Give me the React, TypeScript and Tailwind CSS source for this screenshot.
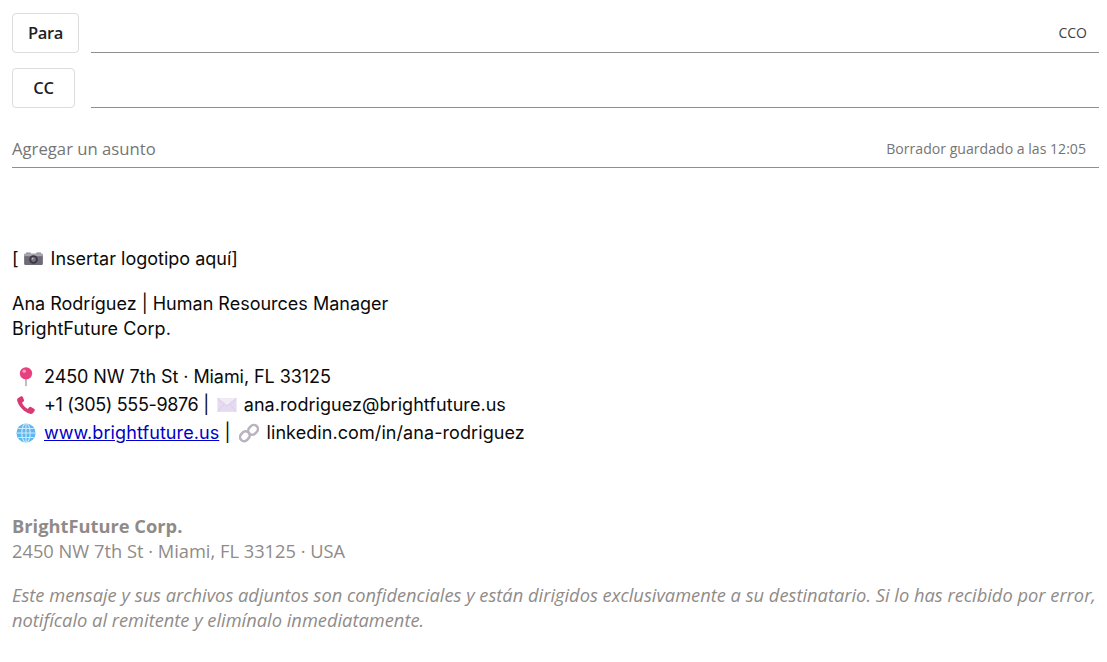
const Camera = () => (
  <svg width="21" height="15" viewBox="0 0 22 16" className="shrink-0">
    <rect x="1" y="3" width="20" height="12" rx="1.5" fill="#6f6a78" />
    <rect x="3" y="1.5" width="5" height="2" fill="#9b97a3" />
    <rect x="14" y="1.5" width="5" height="2" fill="#9b97a3" />
    <rect x="1" y="3" width="20" height="2.5" fill="#a8a4ae" />
    <circle cx="11" cy="9" r="4.6" fill="#3d3944" />
    <circle cx="11" cy="9" r="2.6" fill="#77727f" />
    <circle cx="10" cy="8" r="0.9" fill="#c9c6cf" />
  </svg>
);
const Pin = () => (
  <svg width="20" height="20" viewBox="0 0 20 22" className="shrink-0">
    <rect x="9.2" y="10" width="1.6" height="11" fill="#a9a4ad" />
    <circle cx="10" cy="7" r="6.8" fill="#e8407f" />
    <circle cx="8" cy="4.6" r="1.8" fill="#f9a3c4" />
  </svg>
);
const Phone = () => (
  <svg width="20" height="20" viewBox="0 0 22 22" className="shrink-0">
    <path d="M2 3.5 L5.5 1.5 C6.5 1 7.2 1.5 7.6 2.3 L8.8 5.5 C9 6.4 8.6 7 8 7.5 L6.6 8.6 C7.6 11.3 10 14 13 15.3 L14.4 13.6 C15 13 15.7 12.9 16.4 13.2 L19.8 15 C20.8 15.6 21 16.4 20.5 17.2 L19 19.6 C18.2 20.8 16.8 21 15.4 20.6 C8.6 18.6 3.4 13 1.4 6.6 C1 5.3 1.2 4.2 2 3.5 Z" fill="#d93a72" />
  </svg>
);
const Mail = () => (
  <svg width="20" height="16" viewBox="0 0 22 16" className="shrink-0">
    <rect x="0.5" y="0.5" width="21" height="15" fill="#e6daf0" />
    <path d="M0.5 0.5 L11 9 L21.5 0.5" fill="#f1eaf7" stroke="#d3c3e2" strokeWidth="0.8" />
    <path d="M0.5 15.5 L8 7 M21.5 15.5 L14 7" stroke="#d8cbe6" strokeWidth="0.8" fill="none" />
  </svg>
);
const Globe = () => (
  <svg width="20" height="20" viewBox="0 0 22 22" className="shrink-0">
    <circle cx="11" cy="11" r="10.5" fill="#5cb8ee" />
    <g fill="none" stroke="#cfeafb" strokeWidth="1.2">
      <ellipse cx="11" cy="11" rx="4.6" ry="10.5" />
      <path d="M11 .5 V21.5 M.5 11 H21.5 M2.5 6 H19.5 M2.5 16 H19.5" />
    </g>
  </svg>
);
const Link = () => (
  <svg width="20" height="20" viewBox="0 0 22 22" className="shrink-0">
    <g fill="none" stroke="#b9b3c1" strokeWidth="2.8" strokeLinecap="round">
      <rect x="11" y="1.8" width="9" height="11.5" rx="4.5" transform="rotate(42 15.5 7.5)" />
      <rect x="2" y="8.8" width="9" height="11.5" rx="4.5" transform="rotate(42 6.5 14.5)" />
    </g>
  </svg>
);

export default function App() {
  return (
    <div className="w-[1107px] h-[662px] overflow-hidden bg-white pl-3 pr-2 pt-[13px] text-[#0a0a0a] font-['Inter',sans-serif]">
      <div className="flex gap-3 items-stretch h-10 font-['Open_Sans',sans-serif]">
        <button className="w-[67px] rounded border border-[#dcdcdc] pt-px text-[16.5px] tracking-[-0.3px] font-semibold text-[#1f1f1f]">Para</button>
        <div className="flex-1 border-b border-[#8f8f8f] flex items-center justify-end pr-3 text-sm text-[#424242] h-10">CCO</div>
      </div>
      <div className="flex gap-4 items-stretch h-10 mt-[15px] font-['Open_Sans',sans-serif]">
        <button className="w-[63px] rounded border border-[#dcdcdc] pt-px text-[16.5px] tracking-[-0.3px] font-semibold text-[#1f1f1f]">CC</button>
        <div className="flex-1 border-b border-[#8f8f8f]" />
      </div>
      <div className="flex items-center justify-between h-[41px] pt-[3px] mt-[19px] border-b border-[#8f8f8f] pr-[13px] font-['Open_Sans',sans-serif]">
        <span className="text-[16.7px] text-[#757575]">Agregar un asunto</span>
        <span className="text-[14.1px] text-[#757575]">Borrador guardado a las 12:05</span>
      </div>

      <div className="mt-[78px] text-[18px] leading-[25px]">
        <p className="flex items-center">[<span className="ml-1"><Camera /></span><span className="ml-[7px]">Insertar logotipo aquí]</span></p>
        <p className="mt-5">Ana Rodríguez | Human Resources Manager</p>
        <p className="tracking-[0.1px]">BrightFuture Corp.</p>
        <div className="mt-[22px] leading-7 tracking-[0.02px]">
          <p className="flex items-center gap-2 pl-1"><Pin /> <span className="tracking-[-0.07px]">2450 NW 7th St · Miami, FL 33125</span></p>
          <p className="flex items-center gap-2 pl-1"><Phone /> <span className="tracking-[-0.35px]">+1 (305) 555-9876 |</span> <Mail /> <span className="-ml-px tracking-[0.05px]">ana.rodriguez@brightfuture.us</span></p>
          <p className="flex items-center gap-2 pl-1"><Globe /> <span className="tracking-[0.08px]"><a href="#" className="text-[#0000c8] underline">www.brightfuture.us</a> |</span> <Link /> <span className="tracking-[0.08px]">linkedin.com/in/ana-rodriguez</span></p>
        </div>
      </div>

      <div className="mt-[66px] text-[18.3px] leading-[25px] text-[#8f8b88] font-['Open_Sans',sans-serif]">
        <p className="font-bold">BrightFuture Corp.</p>
        <p>2450 NW 7th St · Miami, FL 33125 · USA</p>
        <p className="mt-[19px] italic">Este mensaje y sus archivos adjuntos son confidenciales y están dirigidos exclusivamente a su destinatario. Si lo has recibido por error, notifícalo al remitente y elimínalo inmediatamente.</p>
      </div>
    </div>
  );
}
